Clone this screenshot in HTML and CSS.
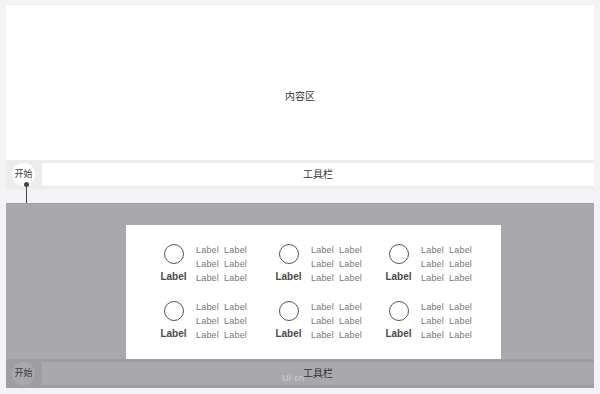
FILE: index.html
```html
<!DOCTYPE html>
<html lang="zh-CN">
<head>
    <meta charset="UTF-8">
    <meta name="viewport" content="width=device-width, initial-scale=1.0">
    <title>开始菜单</title>
    <link rel="stylesheet" href="styles.css">
</head>
<body>
    <!-- default state -->
    <div class="screen">
        <div class="content">内容区</div>
        <div class="toolbar">
            <div class="start">开始</div>
            <div class="bar">工具栏</div>
        </div>
    </div>

    <div class="connector"></div>

    <!-- start menu opened -->
    <div class="screen">
        <div class="content"></div>
        <div class="toolbar">
            <div class="start">开始</div>
            <div class="bar">工具栏</div>
        </div>
        <div class="mask"></div>
        <div class="watermark">UI·cn</div>

        <div class="menu">
            <div class="grid">
                <div class="item">
                    <div class="icon"><span class="ring"></span><strong>Label</strong></div>
                    <div class="links"><span>Label</span><span>Label</span><span>Label</span><span>Label</span><span>Label</span><span>Label</span></div>
                </div>
                <div class="item">
                    <div class="icon"><span class="ring"></span><strong>Label</strong></div>
                    <div class="links"><span>Label</span><span>Label</span><span>Label</span><span>Label</span><span>Label</span><span>Label</span></div>
                </div>
                <div class="item">
                    <div class="icon"><span class="ring"></span><strong>Label</strong></div>
                    <div class="links"><span>Label</span><span>Label</span><span>Label</span><span>Label</span><span>Label</span><span>Label</span></div>
                </div>
                <div class="item">
                    <div class="icon"><span class="ring"></span><strong>Label</strong></div>
                    <div class="links"><span>Label</span><span>Label</span><span>Label</span><span>Label</span><span>Label</span><span>Label</span></div>
                </div>
                <div class="item">
                    <div class="icon"><span class="ring"></span><strong>Label</strong></div>
                    <div class="links"><span>Label</span><span>Label</span><span>Label</span><span>Label</span><span>Label</span><span>Label</span></div>
                </div>
                <div class="item">
                    <div class="icon"><span class="ring"></span><strong>Label</strong></div>
                    <div class="links"><span>Label</span><span>Label</span><span>Label</span><span>Label</span><span>Label</span><span>Label</span></div>
                </div>
            </div>
        </div>
    </div>
</body>
</html>
```

FILE: styles.css
```css
body {
    margin: 0;
    padding: 4px 6px 0;
    background-color: #f3f3f5;
    font-family: 'Liberation Sans', 'Noto Sans CJK SC', sans-serif;
    color: #333;
    position: relative;
}
.screen {
    position: relative;
    background-color: #ececef;
    padding: 1px 0 3px;
    margin-bottom: 14px;
}
.content {
    height: 155px;
    box-sizing: border-box;
    padding-top: 85px;
    background-color: #fff;
    text-align: center;
    font-size: 10px;
    line-height: 14px;
}
.toolbar {
    display: flex;
    align-items: center;
    margin-top: 3px;
    height: 23px;
}
.start {
    width: 23px;
    height: 23px;
    margin-left: 6px;
    margin-right: 7px;
    border-radius: 50%;
    background-color: #fff;
    font-size: 9px;
    line-height: 23px;
    text-align: center;
    color: #444;
}
.bar {
    flex: 1;
    height: 23px;
    background-color: #fff;
    font-size: 10px;
    line-height: 23px;
    text-align: center;
}
.connector {
    position: absolute;
    left: 26px;
    top: 183px;
    width: 1px;
    height: 20px;
    background-color: #444;
}
.connector::before {
    content: '';
    position: absolute;
    left: -2px;
    top: -1px;
    width: 5px;
    height: 5px;
    border-radius: 50%;
    background-color: #444;
}
.mask {
    position: absolute;
    inset: 0;
    background-color: rgba(50, 47, 60, 0.42);
}
.watermark {
    position: absolute;
    left: 276px;
    top: 170px;
    font-size: 9px;
    font-weight: bold;
    color: rgba(255, 255, 255, 0.35);
}
.menu {
    position: absolute;
    left: 120px;
    top: 22px;
    width: 375px;
    height: 134px;
    box-sizing: border-box;
    padding: 18px 0 0 34px;
    background-color: #fff;
}
.grid {
    display: grid;
    grid-template-columns: 115px 110px auto;
    justify-content: start;
    row-gap: 15px;
}
.item {
    display: flex;
    gap: 9px;
}
.icon {
    display: flex;
    flex-direction: column;
    align-items: center;
    width: 27px;
    padding-top: 1px;
}
.ring {
    width: 18px;
    height: 18px;
    border: 1.6px solid #555;
    border-radius: 50%;
    margin-bottom: 6px;
}
.icon strong {
    font-size: 10px;
    line-height: 14px;
    color: #4a4a4a;
}
.links {
    display: grid;
    grid-template-columns: auto auto;
    column-gap: 5px;
    font-size: 9px;
    line-height: 14px;
    letter-spacing: 0.2px;
    color: #777;
}
```
